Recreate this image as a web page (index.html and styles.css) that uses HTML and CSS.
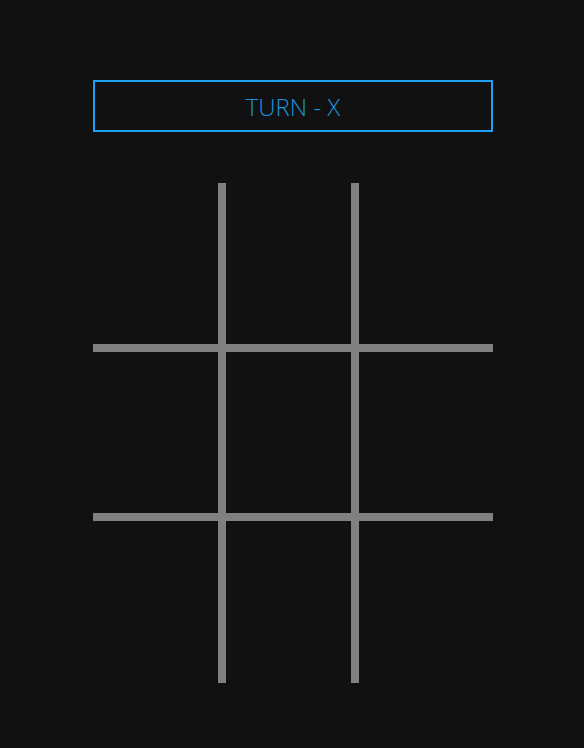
FILE: index.html
```html
<!DOCTYPE html>
<html>
<head>
<meta charset="utf-8">
<link rel="stylesheet" href="styles.css">
</head>
<body>
<div class="game">
  <div class="turn">TURN - X</div>
  <div class="board">
    <div class="cell r c"></div>
    <div class="cell r c"></div>
    <div class="cell c"></div>
    <div class="cell r c"></div>
    <div class="cell r c"></div>
    <div class="cell c"></div>
    <div class="cell r"></div>
    <div class="cell r"></div>
    <div class="cell"></div>
  </div>
</div>
</body>
</html>
```
FILE: styles.css
```css
html, body {
  margin: 0;
  padding: 0;
  background: #111111;
  height: 100%;
}
.game {
  width: 400px;
  margin-left: 93px;
  padding-top: 80px;
  display: flex;
  flex-direction: column;
  gap: 51px;
}
.turn {
  box-sizing: border-box;
  height: 52px;
  border: 2px solid #1ea1f0;
  color: #1e93dd;
  font-family: "Open Sans", sans-serif;
  font-weight: 300;
  font-size: 24px;
  display: flex;
  align-items: center;
  justify-content: center;
}
.board {
  display: grid;
  grid-template-columns: 133px 133px 134px;
  grid-template-rows: 169px 169px 162px;
}
.cell {
  box-sizing: border-box;
}
.cell.r {
  border-right: 8px solid #808080;
}
.cell.c {
  border-bottom: 8px solid #808080;
}
```
